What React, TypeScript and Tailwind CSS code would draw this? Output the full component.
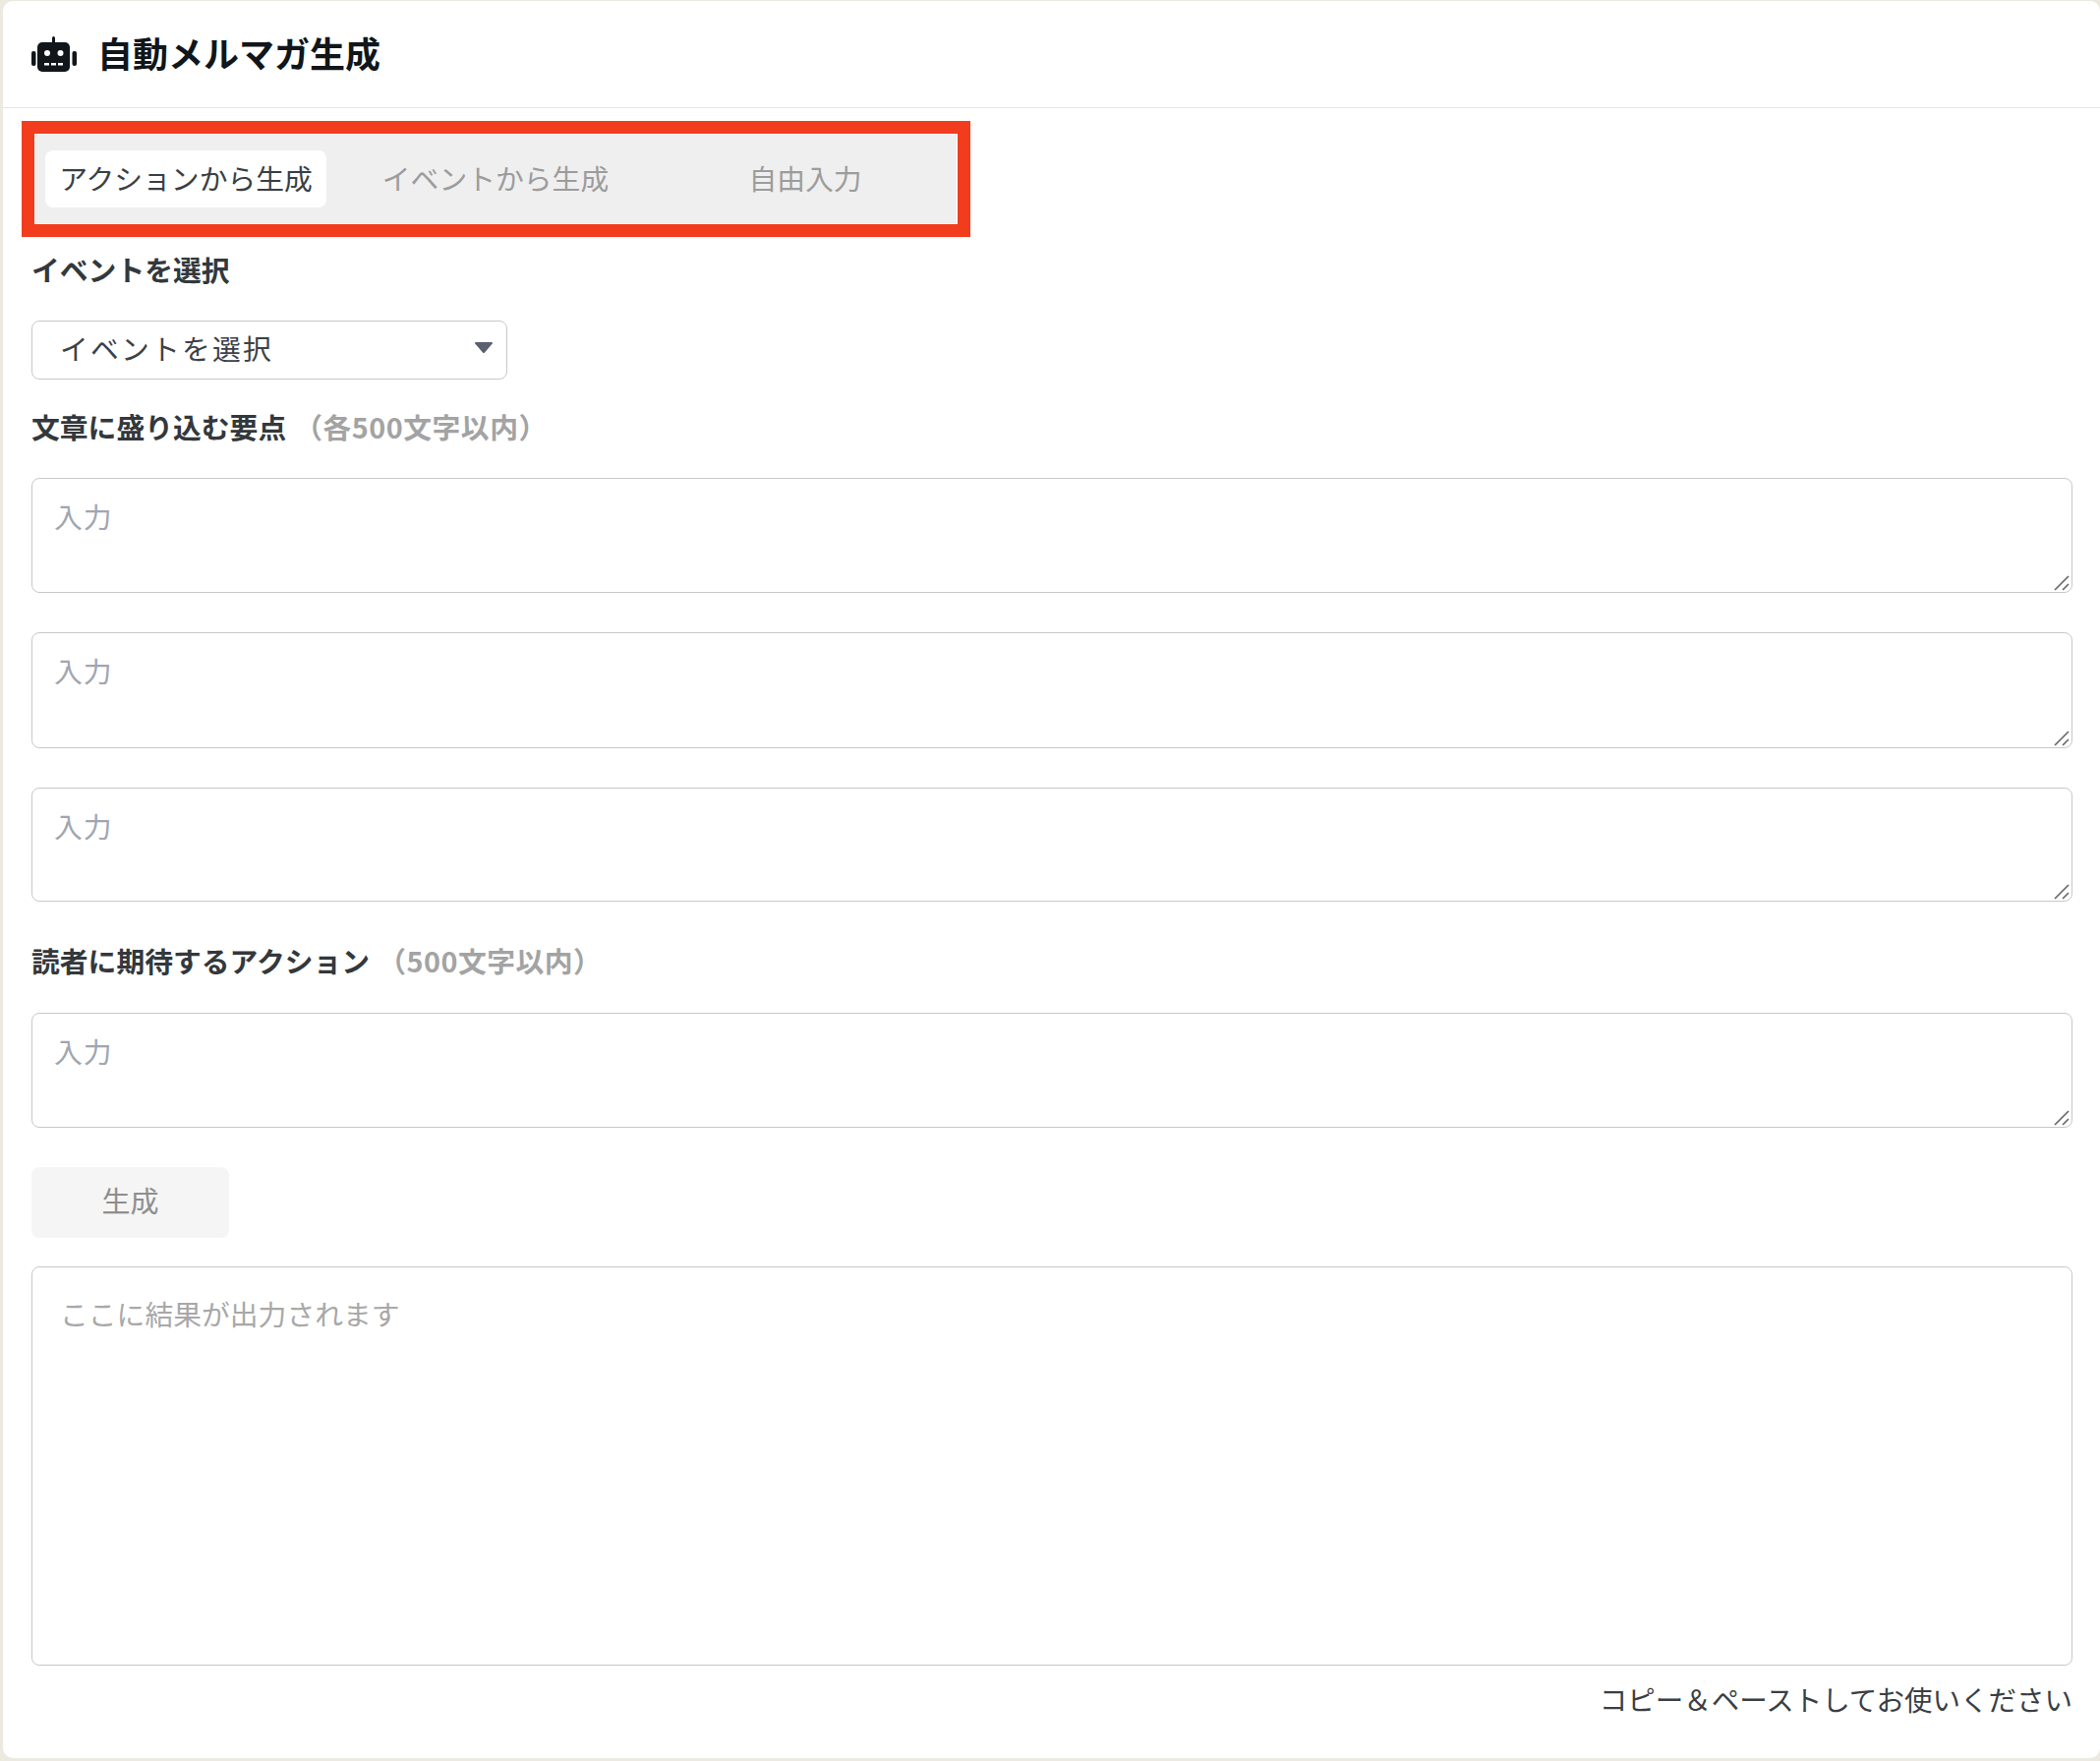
const font = "font-['Noto_Sans_CJK_JP','Noto_Sans',sans-serif]";

function RobotIcon() {
  return (
    <svg viewBox="0 0 46 36" className="w-[46px] h-[36px] shrink-0" fill="#10161a">
      <rect x="21" y="0" width="3" height="8" rx="1.5" />
      <rect x="0" y="15" width="4.5" height="15" rx="2" />
      <rect x="41.5" y="15" width="4.5" height="15" rx="2" />
      <rect x="6" y="6" width="33" height="30" rx="5" />
      <circle cx="16" cy="17" r="3" fill="#fff" />
      <circle cx="29.5" cy="17" r="3" fill="#fff" />
      <rect x="13" y="27" width="5" height="2.5" fill="#fff" />
      <rect x="20" y="27" width="5" height="2.5" fill="#fff" />
      <rect x="27" y="27" width="5" height="2.5" fill="#fff" />
    </svg>
  );
}

function Label({ text, note }: { text: string; note?: string }) {
  return (
    <div className="h-[40px] leading-[37px] text-[28.8px] font-bold text-[#33383c]">
      {text}
      {note && <span className="ml-[8px] tracking-[0.5px] text-[#a3a3a3]">{note}</span>}
    </div>
  );
}

function Field({ className }: { className: string }) {
  return (
    <div className={`relative ${className}`}>
      <textarea
        placeholder="入力"
        className="block h-full w-full resize-none rounded-[8px] border border-[#c8c8c8] bg-white pl-[22px] pt-[18px] text-[28.8px] leading-[40px] tracking-[1px] text-[#333] outline-none placeholder:text-[#a0a6b0]"
      />
      <svg viewBox="0 0 16 16" className="absolute bottom-[2px] right-[3px] h-[16px] w-[16px]" stroke="#666" strokeWidth="1.6" fill="none">
        <path d="M1 15 15 1M9 15l6-6" />
      </svg>
    </div>
  );
}

const tabs = ["アクションから生成", "イベントから生成", "自由入力"];

export default function App() {
  return (
    <div className={`${font} h-[1791px] bg-[#ece9e0] pl-[3px] pt-[1px] pb-[3px]`}>
      <div className="h-full rounded-[10px] bg-white">
        <div className="flex h-[108px] items-center gap-[21px] border-b border-[#e4e4e4] pl-[29px] box-content">
          <RobotIcon />
          <h1 className="pb-[5px] text-[36px] font-bold leading-none text-[#10161a]">自動メルマガ生成</h1>
        </div>

        <div className="pl-[29px] pr-[28px]">
          <div className="-ml-[10px] mt-[13px] w-[965px] border-[13px] border-[#f23c1e] bg-white p-px">
            <div className="flex gap-[29px] bg-[#efefef] px-[10px] py-[16px]">
              {tabs.map((tab, idx) => (
                <button
                  key={tab}
                  className={`h-[58px] w-[286px] rounded-[8px] pb-[3px] text-[28.8px] ${
                    idx === 0 ? "bg-white text-[#3a3f45]" : "text-[#9c9c9c]"
                  }`}
                >
                  {tab}
                </button>
              ))}
            </div>
          </div>

          <div className="mt-[14px]">
            <Label text="イベントを選択" />
          </div>
          <div className="relative mt-[31px] w-[484px]">
            <select className="block h-[60px] w-full appearance-none rounded-[8px] border border-[#c8c8c8] bg-white pb-[5px] pl-[28px] text-[28.8px] tracking-[2.2px] text-[#3c4148] outline-none">
              <option>イベントを選択</option>
            </select>
            <svg viewBox="0 0 18 11" className="absolute right-[15px] top-[22px] h-[11px] w-[18px]" fill="#5a6070">
              <path d="M1 0h16a1 1 0 0 1 .8 1.6L10 10.4a1.3 1.3 0 0 1-2 0L.2 1.6A1 1 0 0 1 1 0z" />
            </svg>
          </div>

          <div className="mt-[29px]">
            <Label text="文章に盛り込む要点" note="（各500文字以内）" />
          </div>
          <Field className="mt-[31px] h-[117px]" />
          <Field className="mt-[40px] h-[118px]" />
          <Field className="mt-[40px] h-[116px]" />

          <div className="mt-[41px]">
            <Label text="読者に期待するアクション" note="（500文字以内）" />
          </div>
          <Field className="mt-[32px] h-[117px]" />

          <button className="mt-[40px] block h-[72px] w-[201px] rounded-[8px] bg-[#f5f5f5] pb-[4px] text-[29px] text-[#8e8e8e]">
            生成
          </button>

          <div className="mt-[29px] h-[406px] rounded-[8px] border border-[#c8c8c8] pl-[28px] pt-[27px] text-[28.8px] leading-[40px] text-[#a8a8a8]">
            ここに結果が出力されます
          </div>
          <div className="mt-[14px] text-right text-[28.5px] leading-[40px] text-[#3a3f45]">
            コピー＆ペーストしてお使いください
          </div>
        </div>
      </div>
    </div>
  );
}
